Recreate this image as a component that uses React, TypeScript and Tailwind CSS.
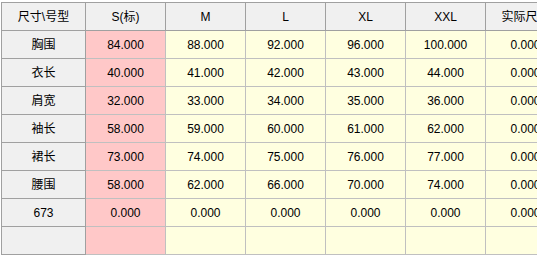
const columns = ["S(标)", "M", "L", "XL", "XXL", "实际尺寸"];

const rows: { name: string; values: string[] }[] = [
  { name: "胸围", values: ["84.000", "88.000", "92.000", "96.000", "100.000", "0.000"] },
  { name: "衣长", values: ["40.000", "41.000", "42.000", "43.000", "44.000", "0.000"] },
  { name: "肩宽", values: ["32.000", "33.000", "34.000", "35.000", "36.000", "0.000"] },
  { name: "袖长", values: ["58.000", "59.000", "60.000", "61.000", "62.000", "0.000"] },
  { name: "裙长", values: ["73.000", "74.000", "75.000", "76.000", "77.000", "0.000"] },
  { name: "腰围", values: ["58.000", "62.000", "66.000", "70.000", "74.000", "0.000"] },
  { name: "673", values: ["0.000", "0.000", "0.000", "0.000", "0.000", "0.000"] },
  { name: "", values: ["", "", "", "", "", ""] },
];

export default function App() {
  return (
    <div className="w-[537px] h-[255px] overflow-hidden bg-white pt-[2px] pl-[1px] font-['Liberation_Sans','Noto_Sans_CJK_SC',sans-serif] text-[12px] text-black">
      <div className="w-[700px] border-t border-l border-[#a0a0a0]">
        {/* header */}
        <div className="flex h-[28px]">
          <div className="w-[84px] shrink-0 flex items-center justify-center bg-[#f0f0f0] border-r border-b border-[#a0a0a0]">
            尺寸\号型
          </div>
          {columns.map((c) => (
            <div
              key={c}
              className="w-[80px] shrink-0 flex items-center justify-center bg-[#f0f0f0] border-r border-b border-[#a0a0a0] whitespace-nowrap"
            >
              {c}
            </div>
          ))}
        </div>
        {rows.map((r, i) => (
          <div key={i} className="flex h-[28px]">
            <div className="w-[84px] shrink-0 flex items-center justify-center bg-[#f0f0f0] border-r border-b border-[#a0a0a0]">
              {r.name}
            </div>
            {r.values.map((v, j) => (
              <div
                key={j}
                className={
                  j === 0
                    ? "w-[80px] shrink-0 flex items-center justify-center bg-[#ffc8c8] border-r border-b border-[#c0c0c0]"
                    : "w-[80px] shrink-0 flex items-center justify-center bg-[#ffffe0] border-r border-b border-[#c0c0c0]"
                }
              >
                {v}
              </div>
            ))}
          </div>
        ))}
      </div>
    </div>
  );
}
